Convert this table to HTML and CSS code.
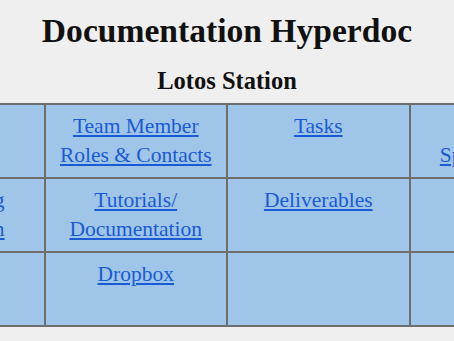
FILE: index.html
```html
<!DOCTYPE html>
<html lang="en">
<head>
<meta charset="utf-8">
<title>Documentation Hyperdoc</title>
<link rel="stylesheet" href="styles.css">
</head>
<body>
<header class="page-head">
  <h1 class="title">Documentation Hyperdoc</h1>
  <h2 class="subtitle">Lotos Station</h2>
</header>
<div class="table-wrap">
  <table class="doc-table">
    <tr>
      <td></td>
      <td><a href="#">Team Member Roles &amp; Contacts</a></td>
      <td><a href="#">Tasks</a></td>
      <td><a href="#">Project Specifications</a></td>
    </tr>
    <tr>
      <td><a href="#">Onboarding Information</a></td>
      <td><a href="#">Tutorials/ Documentation</a></td>
      <td><a href="#">Deliverables</a></td>
      <td></td>
    </tr>
    <tr>
      <td></td>
      <td><a href="#">Dropbox</a></td>
      <td></td>
      <td></td>
    </tr>
  </table>
</div>
</body>
</html>
```
FILE: styles.css
```css
html, body {
  margin: 0;
  padding: 0;
  background: #efefef;
}
body {
  font-family: "Liberation Serif", "Times New Roman", serif;
  color: #111;
  overflow: hidden;
  padding-top: 11px;
}
.page-head {
  text-align: center;
}
.title {
  margin: 0;
  font-size: 33.6px;
  line-height: 40px;
  font-weight: bold;
}
.subtitle {
  margin: 15px 0 0;
  font-size: 24.5px;
  line-height: 30px;
  font-weight: bold;
}
.table-wrap {
  display: flex;
  justify-content: center;
  margin-top: 7px;
}
.doc-table {
  flex: none;
  width: 732px;
  border-collapse: collapse;
  table-layout: fixed;
  background: #9fc5e8;
  border: 2px solid #6e6e6e;
}
.doc-table td {
  border: 2px solid #6e6e6e;
  height: 74px;
  box-sizing: border-box;
  padding: 7px 6px 6px;
  vertical-align: top;
  text-align: center;
  font-size: 21.5px;
  line-height: 29px;
}
.doc-table a {
  color: #1a5bd3;
  text-decoration: underline;
}
```
